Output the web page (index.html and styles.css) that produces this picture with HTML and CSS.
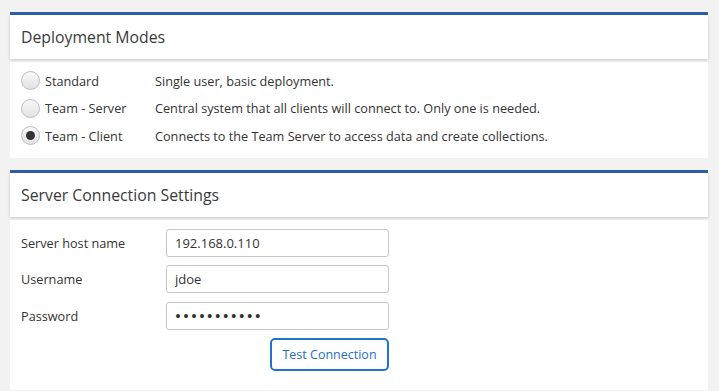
FILE: index.html
```html
<!DOCTYPE html>
<html lang="en">
<head>
    <meta charset="UTF-8">
    <meta name="viewport" content="width=device-width, initial-scale=1.0">
    <title>Deployment Settings</title>
    <link rel="stylesheet" href="styles.css">
</head>
<body>
    <div class="panel">
        <div class="panel-header">Deployment Modes</div>
        <div class="panel-body modes">
            <label class="mode-row">
                <span class="mode-name"><input type="radio" name="mode" class="radio"> Standard</span>
                <span class="mode-desc">Single user, basic deployment.</span>
            </label>
            <label class="mode-row">
                <span class="mode-name"><input type="radio" name="mode" class="radio"> Team - Server</span>
                <span class="mode-desc">Central system that all clients will connect to. Only one is needed.</span>
            </label>
            <label class="mode-row">
                <span class="mode-name"><input type="radio" name="mode" class="radio" checked> Team - Client</span>
                <span class="mode-desc">Connects to the Team Server to access data and create collections.</span>
            </label>
        </div>
    </div>

    <div class="panel">
        <div class="panel-header">Server Connection Settings</div>
        <div class="panel-body settings">
            <div class="form-row">
                <label for="host">Server host name</label>
                <input type="text" id="host" value="192.168.0.110">
            </div>
            <div class="form-row">
                <label for="user">Username</label>
                <input type="text" id="user" value="jdoe">
            </div>
            <div class="form-row">
                <label for="pass">Password</label>
                <input type="password" id="pass" value="secretpass1">
            </div>
            <div class="form-row">
                <span></span>
                <div class="btn-wrap">
                    <button type="button" class="btn-test">Test Connection</button>
                </div>
            </div>
        </div>
    </div>
</body>
</html>
```

FILE: styles.css
```css
body {
    margin: 0;
    padding: 12px 11px 0 10px;
    background-color: #f2f2f2;
    font-family: "Open Sans", sans-serif;
    font-size: 12.7px;
    color: #333;
}

.panel {
    border-top: 3px solid #2e5ea6;
    margin-bottom: 12px;
}

.panel-header {
    background: white;
    height: 44px;
    line-height: 44px;
    padding: 0 11px;
    font-size: 15.8px;
    color: #3a3a3a;
    box-shadow: 0 1px 3px rgba(0,0,0,0.18);
    margin-bottom: 3px;
}

.panel-body {
    background: white;
}

.modes {
    padding: 5px 11px 8px;
}

.mode-row {
    display: flex;
    align-items: center;
    height: 27.5px;
}

.mode-name {
    display: flex;
    align-items: center;
    width: 134px;
    gap: 5px;
}

.radio {
    appearance: none;
    margin: 0;
    width: 19px;
    height: 19px;
    border-radius: 50%;
    border: 1px solid #bdbdbd;
    background: linear-gradient(#f8f8f8, #e2e2e2);
    box-sizing: border-box;
    position: relative;
}

.radio:checked::after {
    content: "";
    position: absolute;
    left: 4px;
    top: 4px;
    width: 9px;
    height: 9px;
    border-radius: 50%;
    background: #333;
}

.settings {
    padding: 9px 11px 19px;
    display: flex;
    flex-direction: column;
    gap: 8.5px;
}

.form-row {
    display: grid;
    grid-template-columns: 145px 223px;
    align-items: center;
}

.form-row input {
    height: 28px;
    box-sizing: border-box;
    border: 1px solid #c8c8c8;
    border-radius: 3px;
    padding: 0 8px;
    font-family: "Open Sans", sans-serif;
    font-size: 13px;
    color: #333;
}

.form-row input[type="password"] {
    font-family: "DejaVu Sans", sans-serif;
    font-size: 13.5px;
    padding-left: 7px;
}

.btn-wrap {
    display: flex;
    justify-content: flex-end;
}

.btn-test {
    width: 119px;
    height: 33px;
    border: 2px solid #1f74c9;
    border-radius: 5px;
    background: white;
    color: #1f6fbf;
    font-family: "Open Sans", sans-serif;
    font-size: 12.5px;
    padding: 0;
}
```
